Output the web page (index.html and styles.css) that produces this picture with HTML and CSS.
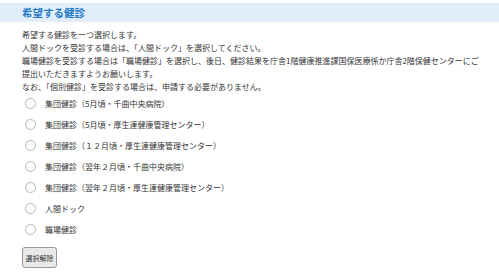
FILE: index.html
```html
<!DOCTYPE html>
<html lang="ja">
<head>
  <meta charset="UTF-8">
  <meta name="viewport" content="width=device-width, initial-scale=1.0">
  <title>希望する健診</title>
  <link rel="stylesheet" href="styles.css">
</head>
<body>
  <div class="section-title">希望する健診</div>
  <div class="section-body">
    <p class="note">
      希望する健診を一つ選択します。<br>
      人間ドックを受診する場合は、「人間ドック」を選択してください。<br>
      職場健診を受診する場合は「職場健診」を選択し、後日、健診結果を庁舎1階健康推進課国保医療係か庁舎2階保健センターにご<br>
      提出いただきますようお願いします。<br>
      なお、「個別健診」を受診する場合は、申請する必要がありません。
    </p>
    <div class="choices">
      <label class="choice"><input type="radio" name="kenshin" value="1"><span>集団健診（5月頃・千曲中央病院）</span></label>
      <label class="choice"><input type="radio" name="kenshin" value="2"><span>集団健診（5月頃・厚生連健康管理センター）</span></label>
      <label class="choice"><input type="radio" name="kenshin" value="3"><span>集団健診（１２月頃・厚生連健康管理センター）</span></label>
      <label class="choice"><input type="radio" name="kenshin" value="4"><span>集団健診（翌年２月頃・千曲中央病院）</span></label>
      <label class="choice"><input type="radio" name="kenshin" value="5"><span>集団健診（翌年２月頃・厚生連健康管理センター）</span></label>
      <label class="choice"><input type="radio" name="kenshin" value="6"><span>人間ドック</span></label>
      <label class="choice"><input type="radio" name="kenshin" value="7"><span>職場健診</span></label>
    </div>
    <button class="button" id="clearButton">選択解除</button>
  </div>

  <script>
    const clearButton = document.getElementById("clearButton");
    clearButton.addEventListener("click", () => {
      document.querySelectorAll("input[name=kenshin]").forEach(radio => radio.checked = false);
    });
  </script>
</body>
</html>
```

FILE: styles.css
```css
body {
  font-family: "Noto Sans CJK JP", "Noto Sans", sans-serif;
  margin: 0;
  background-color: #ffffff;
  color: #333333;
}

.section-title {
  margin-top: 3px;
  height: 19px;
  line-height: 19px;
  padding-left: 22px;
  background-color: #e1eef9;
  color: #1d78c6;
  font-size: 10.5px;
  font-weight: bold;
}

.section-body {
  padding-left: 22px;
}

.note {
  margin: 6px 0 0 0;
  font-size: 8px;
  line-height: 13px;
  white-space: nowrap;
}

.choices {
  display: flex;
  flex-direction: column;
}

.choice {
  display: flex;
  align-items: center;
  height: 21px;
  font-size: 8px;
  cursor: pointer;
}

.choice input {
  appearance: none;
  width: 11px;
  height: 11px;
  margin: 0 9px 0 3px;
  border: 1px solid #b5b5b5;
  border-radius: 50%;
  background-color: #ffffff;
}

.choice input:checked {
  background: radial-gradient(circle, #1d78c6 40%, #ffffff 45%);
}

.button {
  margin-top: 7px;
  width: 35px;
  height: 21px;
  padding: 0;
  font-family: inherit;
  font-size: 7px;
  color: #333333;
  background-color: #e8e8e8;
  border: 1px solid #999999;
  border-radius: 3px;
  cursor: pointer;
}

.button:hover {
  background-color: #dcdcdc;
}
```
